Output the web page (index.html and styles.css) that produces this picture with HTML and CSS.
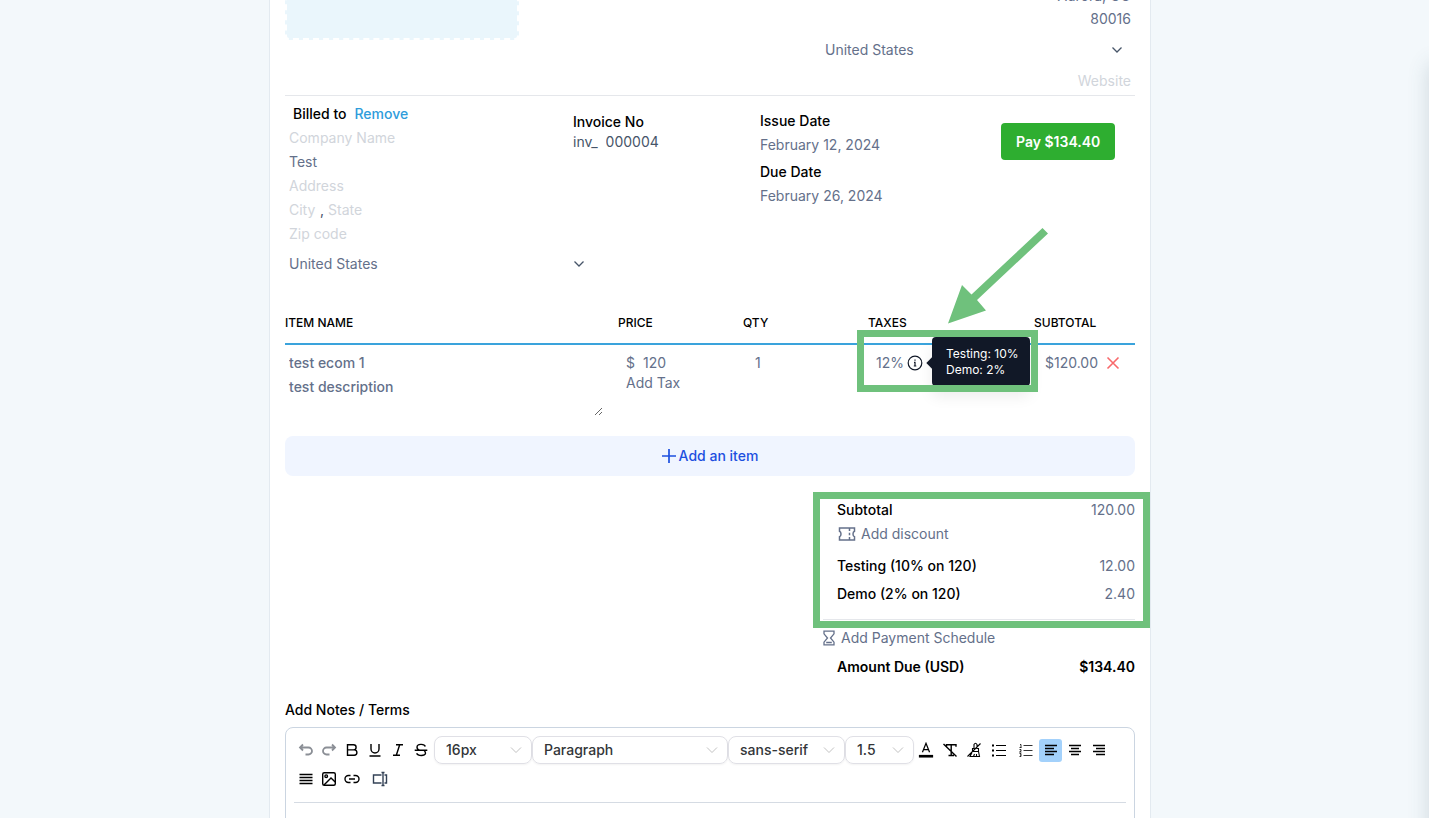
FILE: index.html
```html
<!DOCTYPE html>
<html lang="en">
<head>
<meta charset="utf-8">
<title>Invoice editor</title>
<link rel="stylesheet" href="styles.css">
</head>
<body>
<main class="page">
<form class="invoice">
  <header class="sender">
    <div class="logo-drop"></div>
    <div class="sender-address">
      <div class="sender-city"><input class="field" aria-label="City and state" value="Aurora, CO"></div>
      <input class="field" aria-label="Zip code" value="80016">
      <label class="country"><select aria-label="Country"><option>United States</option></select>
        <svg class="chevron" viewBox="0 0 12 12"><path d="M1.500 3.500 6 8l4.500-4.500"/></svg></label>
      <input class="field" aria-label="Website" placeholder="Website">
    </div>
  </header>

  <section class="details">
    <div class="billed">
      <div class="billed-head"><strong>Billed to</strong><a class="remove" href="#">Remove</a></div>
      <input class="field" aria-label="Company name" placeholder="Company Name">
      <input class="field" aria-label="Client name" value="Test">
      <input class="field" aria-label="Address" placeholder="Address">
      <div class="city-row"><input class="field city" aria-label="City" placeholder="City"><span>,</span><input class="field" aria-label="State" placeholder="State"></div>
      <input class="field" aria-label="Zip code" placeholder="Zip code">
      <label class="country"><select aria-label="Client country"><option>United States</option></select>
        <svg class="chevron" viewBox="0 0 12 12"><path d="M1.500 3.500 6 8l4.500-4.500"/></svg></label>
    </div>
    <div class="number">
      <label for="invoice-no">Invoice No</label>
      <div class="number-row"><span>inv_</span><input id="invoice-no" value="000004"></div>
    </div>
    <div class="dates">
      <strong>Issue Date</strong><span>February 12, 2024</span>
      <strong>Due Date</strong><span>February 26, 2024</span>
    </div>
    <div class="pay"><button type="button" class="pay-button">Pay $134.40</button></div>
  </section>

  <table class="items">
    <colgroup><col><col class="col-price"><col class="col-qty"><col class="col-taxes"><col class="col-subtotal"></colgroup>
    <thead><tr><th>ITEM NAME</th><th>PRICE</th><th>QTY</th><th>TAXES</th><th>SUBTOTAL</th></tr></thead>
    <tbody><tr>
      <td><input class="field item-name" aria-label="Item name" value="test ecom 1"><textarea class="item-description" aria-label="Description">test description</textarea></td>
      <td class="price"><div class="price-row"><span>$</span><input aria-label="Price" value="120"></div><button type="button" class="link-button">Add Tax</button></td>
      <td class="qty"><input aria-label="Quantity" value="1"></td>
      <td class="taxes">
        <div class="tax-row"><span>12%</span>
          <svg class="info" viewBox="0 0 16 16"><circle cx="8" cy="8" r="6.800"/><path d="M7 7.300h1V11M6.800 11h2.500M8 4.600v1.200"/></svg></div>
        <div class="tooltip" role="tooltip">Testing: 10%<br>Demo: 2%</div>
        <div class="frame tax-frame"></div>
        <svg class="arrow" viewBox="0 0 102 96"><path d="M95.500 0 101 5.500 30 72 39 82.500 1 95.500 15 57 24.500 66.500z"/></svg>
      </td>
      <td class="subtotal"><div class="subtotal-row"><span>$120.00</span><button type="button" class="icon-button" aria-label="Remove item"><svg viewBox="0 0 14 14"><path d="M1.500 1.500l11 11M12.500 1.500l-11 11"/></svg></button></div></td>
    </tr></tbody>
  </table>

  <button type="button" class="add-item"><svg viewBox="0 0 14 14"><path d="M7 0v14M0 7h14"/></svg>Add an item</button>

  <section class="totals">
    <div class="total-row"><strong>Subtotal</strong><span>120.00</span></div>
    <button type="button" class="link-button discount"><svg viewBox="0 0 18 14"><path d="M1.500 1H16.500V4.200C14.500 4.800 14.500 9.200 16.500 9.800V13H1.500V9.800C3.500 9.200 3.500 4.800 1.500 4.200zM11.500 1.500v2.500M11.500 5.800v2.400M11.500 10v2.500"/></svg>Add discount</button>
    <div class="total-row"><strong>Testing (10% on 120)</strong><span>12.00</span></div>
    <div class="total-row"><strong>Demo (2% on 120)</strong><span>2.40</span></div>
    <div class="schedule"><button type="button" class="link-button"><svg viewBox="0 0 12 16"><path d="M1 1.200h10v2.600L7.500 8 11 12.200v2.600H1v-2.600L4.500 8 1 3.800zM3.200 12.500h5.600"/></svg>Add Payment Schedule</button></div>
    <div class="total-row due"><strong>Amount Due (USD)</strong><strong>$134.40</strong></div>
    <div class="frame totals-frame"></div>
  </section>

  <section class="notes">
    <h2>Add Notes / Terms</h2>
    <div class="editor">
      <div class="toolbar">
        <button type="button" class="tool faded" aria-label="Undo"><svg viewBox="0 0 16 16"><path d="M5 2.500 2 5.500l3 3M2 5.500h8.500a3.500 3.500 0 0 1 0 7H7.500"/></svg></button>
        <button type="button" class="tool faded" aria-label="Redo"><svg viewBox="0 0 16 16"><path d="M11 2.500l3 3-3 3M14 5.500H5.500a3.500 3.500 0 0 0 0 7H8.500"/></svg></button>
        <button type="button" class="tool" aria-label="Bold"><svg viewBox="0 0 16 16"><path d="M3.500 2.700h6a2.600 2.600 0 0 1 0 5.200h-6zM3.500 7.900h6.700a2.700 2.700 0 0 1 0 5.400H3.500z"/></svg></button>
        <button type="button" class="tool" aria-label="Underline"><svg viewBox="0 0 16 16"><path d="M4 2v5a4 4 0 0 0 8 0V2M2.500 14h11"/></svg></button>
        <button type="button" class="tool" aria-label="Italic"><svg viewBox="0 0 16 16"><path d="M6 2.700h7M3 13.300h7M9.700 2.700 6.300 13.300"/></svg></button>
        <button type="button" class="tool" aria-label="Strikethrough"><svg viewBox="0 0 16 16"><path d="M1.700 8.300h12.600M12.300 4.500C11.500 1.700 4 1.500 4 5.200c0 1.500 1.300 2.500 3 3.100M3.700 11.300c1 3 8.800 3 8.800 0 0-1.300-.6-2.200-1.500-3"/></svg></button>
        <label class="picker size"><select aria-label="Font size"><option>16px</option></select><svg viewBox="0 0 12 12"><path d="M1 3.500l5 5 5-5"/></svg></label>
        <label class="picker block"><select aria-label="Block type"><option>Paragraph</option></select><svg viewBox="0 0 12 12"><path d="M1 3.500l5 5 5-5"/></svg></label>
        <label class="picker family"><select aria-label="Font family"><option>sans-serif</option></select><svg viewBox="0 0 12 12"><path d="M1 3.500l5 5 5-5"/></svg></label>
        <label class="picker spacing"><select aria-label="Line height"><option>1.5</option></select><svg viewBox="0 0 12 12"><path d="M1 3.500l5 5 5-5"/></svg></label>
        <div class="tool-group">
          <button type="button" class="tool" aria-label="Text colour"><svg viewBox="0 0 16 18"><path d="M4 11.500 8 1.500l4 10M5.200 8.500h5.600"/><path class="solid" d="M0 14.500h16v3H0z"/></svg></button>
          <button type="button" class="tool" aria-label="Clear formatting"><svg viewBox="0 0 16 16"><path d="M4.500 4.500V2.700H14v2M9.200 2.700v10.600M6.500 13.500h5.500M1.500 2l13 12.500"/></svg></button>
          <button type="button" class="tool thin" aria-label="Clear highlight"><svg viewBox="0 0 16 16"><path d="M8 6.500V2.500Q9.500 0 11 2.500v4h1.500v3H6.500v-3zM6.500 9.500 4 14.500h9.500l-1-5M7.500 14.500l1-2.500M10.500 14.500V12M14.500 1.500l-13 13"/></svg></button>
        </div>
        <div class="tool-group lists">
          <button type="button" class="tool thin" aria-label="Bulleted list"><svg viewBox="0 0 16 16"><path d="M5 3.500h10M5 8.500h10M5 13.500h10"/><path class="solid" d="M1 2.500h2v2H1zM1 7.500h2v2H1zM1 12.500h2v2H1z"/></svg></button>
          <button type="button" class="tool hairline" aria-label="Numbered list"><svg viewBox="0 0 16 16"><path d="M5.500 3.500h9M5.500 8.500h9M5.500 13.500h9M2 2.500h1v3M1.500 5.500h2M1.500 7.500h1.500v1.500l-1.500 1h2M1.500 11.500H3v3H1.500M2 13h1"/></svg></button>
        </div>
        <div class="tool-group">
          <button type="button" class="tool active" aria-label="Align left"><svg viewBox="0 0 16 16"><path d="M2 3.500h12M2 6.500h9M2 9.500h12M2 12.500h9"/></svg></button>
          <button type="button" class="tool" aria-label="Align centre"><svg viewBox="0 0 16 16"><path d="M2 3.500h12M4 6.500h8M2 9.500h12M4 12.500h8"/></svg></button>
          <button type="button" class="tool" aria-label="Align right"><svg viewBox="0 0 16 16"><path d="M2 3.500h12M5 6.500h9M2 9.500h12M5 12.500h9"/></svg></button>
        </div>
        <button type="button" class="tool" aria-label="Justify"><svg viewBox="0 0 16 16"><path d="M1.500 3.500h13M1.500 6.500h13M1.500 9.500h13M1.500 12.500h13"/></svg></button>
        <button type="button" class="tool" aria-label="Insert image"><svg viewBox="0 0 16 16"><rect x="1.700" y="1.700" width="12.600" height="12.600" rx="1.500"/><circle cx="5.200" cy="5.200" r="1.300"/><path d="M3 14l7-7 4.200 4"/></svg></button>
        <button type="button" class="tool" aria-label="Insert link"><svg viewBox="0 0 16 16"><path d="M6.500 4.500H4.500a3.500 3.500 0 0 0 0 7h2M9.500 4.500h2a3.500 3.500 0 0 1 0 7h-2M5 8h6"/></svg></button>
        <button type="button" class="tool variable" aria-label="Insert field"><svg viewBox="0 0 16 16"><path d="M9.500 4H1.500v8h8M12.500 4h2v8h-2M11 1.500v13M9.500 1.500h3M9.500 14.500h3"/></svg></button>
      </div>
      <div class="editor-body" contenteditable="true" role="textbox" aria-label="Notes"></div>
    </div>
  </section>
</form>
</main>
<aside class="drawer"></aside>
</body>
</html>
```
FILE: styles.css
```css
* { box-sizing: border-box; }

html, body { height: 100%; overflow: hidden; }

body {
  margin: 0;
  background: #f3f8fb;
  color: #64708a;
  font: 14px/24px Inter, "Liberation Sans", sans-serif;
}

input, select, textarea, button {
  margin: 0;
  padding: 0;
  border: 0;
  background: none;
  color: inherit;
  font: inherit;
}

input { min-width: 0; height: 24px; }
button { cursor: pointer; }
strong { color: #000; font-weight: 500; }
svg { display: block; flex: none; fill: none; stroke: currentColor; }
::placeholder { color: #d1d5db; opacity: 1; }

.page { padding-right: 9px; }

.invoice {
  max-width: 882px;
  margin: -81px auto 0;
  padding: 0 15px;
  border: 1px solid #e3eaf0;
  background: #fff;
}

.field { display: block; width: 100%; padding: 0 4px; }

/* Sender */
.sender {
  display: flex;
  justify-content: space-between;
  align-items: flex-end;
  border-bottom: 1px solid #e5e7eb;
}

.logo-drop {
  width: 234px;
  height: 120px;
  margin-bottom: 55px;
  border: 2px dashed #fff;
  border-radius: 4px;
  background: #eaf6fc;
}

.sender-address { width: 314px; padding-bottom: 2px; }
.sender-address .field { text-align: right; }
.sender-city { margin-bottom: -1px; }

.country { position: relative; display: block; padding: 7px 0; }

.country select {
  display: block;
  width: 100%;
  height: 24px;
  padding: 0 4px;
  appearance: none;
}

.chevron {
  position: absolute;
  right: 12px;
  top: 13px;
  width: 12px;
  height: 12px;
  stroke: #475569;
  stroke-width: 1.3;
}

/* Details */
.details {
  display: grid;
  grid-template-columns: 312px 163px 1fr 134px;
  padding-top: 6px;
}

.billed-head { display: flex; gap: 8px; height: 24px; padding-left: 8px; }
.remove { color: #2e9cdb; font-weight: 500; text-decoration: none; }
.city-row { display: flex; color: #475569; }
.city-row .city { width: 35px; flex: none; }
.billed .country { padding-top: 6px; }
.billed .chevron { top: 12px; }

.number {
  margin-left: -24px;
  padding-top: 10px;
  color: #475569;
  line-height: 20px;
  white-space: nowrap;
}

.number label { display: block; color: #000; font-weight: 500; }
.number-row { display: flex; gap: 8px; }
.number-row input { width: 80px; height: 20px; }

.dates { display: flex; flex-direction: column; padding-top: 7px; }
.dates span { margin-bottom: 3px; }

.pay { padding-top: 21px; }

.pay-button {
  height: 37px;
  padding: 0 15px;
  border-radius: 4px;
  background: #2eae30;
  color: #fff;
  font-weight: 600;
}

/* Items */
.items {
  width: 100%;
  margin-top: 28px;
  border-collapse: collapse;
  table-layout: fixed;
}

.col-price, .col-qty { width: 125px; }
.col-taxes { width: 166px; }
.col-subtotal { width: 101px; }

.items th {
  padding: 0 0 8px;
  border-bottom: 2px solid #3aa3dc;
  color: #000;
  font-size: 12px;
  font-weight: 500;
  text-align: left;
}

.items td { position: relative; padding: 6px 0 0; vertical-align: top; }
.item-name { font-weight: 500; }

.item-description {
  display: block;
  width: 318px;
  height: 41px;
  padding: 0 4px;
  font-weight: 500;
  resize: both;
}

.items .price { padding-left: 8px; }
.items .qty { padding-left: 12px; }
.items .taxes { padding-left: 8px; }
.items .subtotal { padding-left: 11px; }
.qty input { width: 60px; }
.price-row { display: flex; gap: 8px; }
.price-row input { width: 60px; }

.link-button { display: flex; align-items: center; line-height: 16px; }
.tax-row { display: flex; align-items: center; gap: 3px; }
.info { width: 16px; height: 16px; color: #111827; stroke-width: 1.2; }

.subtotal-row { display: flex; align-items: center; gap: 8px; }
.icon-button svg { width: 14px; height: 14px; color: #f8696b; stroke-width: 1.6; }

.tooltip {
  position: absolute;
  top: -8px;
  right: 4px;
  width: 98px;
  padding: 9px 14px 8px;
  border-radius: 4px;
  background: #111827;
  box-shadow: 0 10px 15px rgba(0, 0, 0, 0.08);
  color: #fff;
  font-size: 12px;
  line-height: 16px;
  white-space: nowrap;
}

.tooltip::before {
  content: "";
  position: absolute;
  left: -4px;
  top: 22px;
  width: 8px;
  height: 8px;
  background: #111827;
  transform: rotate(45deg);
}

.frame { position: absolute; border: 7px solid #6fc17c; pointer-events: none; }
.tax-frame { top: -15px; left: -11px; right: -4px; height: 62px; }

.arrow {
  position: absolute;
  left: 79px;
  top: -117px;
  width: 102px;
  height: 96px;
  fill: #6fc17c;
  stroke: none;
}

.add-item {
  display: flex;
  align-items: center;
  justify-content: center;
  gap: 3px;
  width: 100%;
  height: 40px;
  margin-top: 20px;
  border-radius: 8px;
  background: #f0f5ff;
  color: #1d4fe0;
  font-weight: 500;
}

.add-item svg { width: 14px; height: 14px; stroke-width: 1.7; }

/* Totals */
.totals { position: relative; width: 298px; margin: 20px 0 0 auto; }
.total-row { display: flex; justify-content: space-between; padding: 2px 0; }
.discount { gap: 5px; height: 24px; margin-bottom: 6px; margin-top: -2px; }
.discount svg { width: 18px; height: 14px; stroke-width: 1.5; margin-left: 1px; }

.schedule {
  margin: 11px 0 0 -14px;
  padding: 10px 0 7px;
  border-top: 1px solid #e5e7eb;
}

.schedule .link-button { gap: 6px; }
.schedule svg { width: 12px; height: 16px; stroke-width: 1.3; }
.due strong { font-weight: 600; }
.totals-frame { top: -4px; left: -24px; right: -15px; height: 136px; }

/* Notes */
.notes h2 { margin: 17px 0 5px; color: #000; font-size: 14px; font-weight: 500; }

.editor {
  padding: 8px 8px 0;
  border: 1px solid #cbd5e1;
  border-radius: 8px 8px 0 0;
}

.toolbar {
  display: flex;
  flex-wrap: wrap;
  align-items: center;
  row-gap: 3px;
  padding: 0 0 12px;
  border-bottom: 1px solid #d5dbe3;
  color: #000;
}

.tool {
  display: flex;
  align-items: center;
  justify-content: center;
  width: 23px;
  height: 23px;
  border-radius: 3px;
}

.tool svg { width: 16px; height: 16px; stroke-width: 1.4; }
.tool .solid { fill: currentColor; stroke: none; }
.tool-group { display: flex; gap: 1px; }
.lists { gap: 0; }
.lists .tool { width: 27px; }
.faded { color: #8b8f96; }
.faded svg { stroke-width: 1.8; }
.thin svg { stroke-width: 1.1; }
.hairline svg { stroke-width: 0.8; }
.active { background: #a3d1fb; }
.variable { width: 33px; color: #334155; }

.picker { position: relative; display: block; }

.picker select {
  display: block;
  width: 100%;
  height: 28px;
  padding: 0 11px;
  border: 1px solid #e0e0e6;
  border-radius: 8px;
  box-shadow: 0 1px 2px rgba(0, 0, 0, 0.05);
  color: #333639;
  font-weight: 500;
  appearance: none;
}

.picker svg {
  position: absolute;
  right: 10px;
  top: 8px;
  width: 12px;
  height: 12px;
  color: #c2c2c2;
}

.size { width: 98px; margin-left: 2px; }
.block { width: 196px; }
.family { width: 117px; }
.spacing { width: 69px; }
.editor-body { min-height: 200px; }

/* Closed side drawer: only its shadow reaches into the page */
.drawer {
  position: fixed;
  top: 64px;
  bottom: -40px;
  left: 100%;
  width: 300px;
  box-shadow: 0 0 20px rgba(60, 90, 105, 0.2);
}
```
